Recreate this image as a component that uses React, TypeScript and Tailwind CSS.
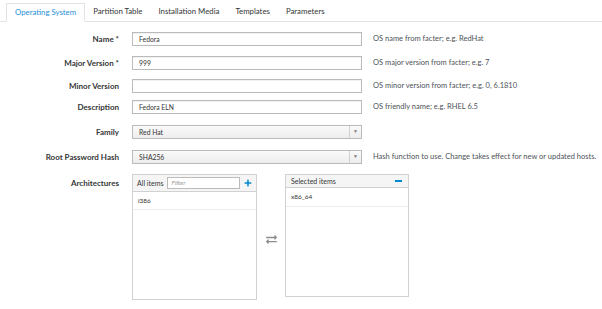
import { FaExchangeAlt, FaPlus } from "react-icons/fa";

const tabs = [
  "Operating System",
  "Partition Table",
  "Installation Media",
  "Templates",
  "Parameters",
];

function Row({
  label,
  help,
  className,
  children,
}: {
  label: string;
  help?: string;
  className?: string;
  children: React.ReactNode;
}) {
  return (
    <div className={`flex h-[14px] items-center ${className ?? ""}`}>
      <label className="w-[120px] shrink-0 pr-[1px] text-right text-[8px] font-bold text-[#363636]">
        {label}
      </label>
      <div className="ml-[12px] w-[230px] shrink-0">{children}</div>
      {help && (
        <span className="ml-[11px] whitespace-nowrap text-[7.5px] text-[#4d5258]">
          {help}
        </span>
      )}
    </div>
  );
}

function TextInput({ value }: { value: string }) {
  return (
    <div className="flex h-[14px] items-center border border-[#bbb] bg-white px-[6px] text-[6.8px] text-[#363636] shadow-[inset_0_1px_1px_rgba(0,0,0,0.06)]">
      {value}
    </div>
  );
}

function Select({ value }: { value: string }) {
  return (
    <div className="flex h-[14px] items-center border border-[#bbb] bg-gradient-to-b from-[#fafafa] to-[#ededed] text-[6.8px] text-[#363636]">
      <span className="flex-1 px-[6px]">{value}</span>
      <span className="flex h-full w-[12px] items-center justify-center border-l border-[#d1d1d1] text-[5px] text-[#777]">
        ▼
      </span>
    </div>
  );
}

export default function App() {
  return (
    <div className="h-[309px] w-[602px] overflow-hidden bg-white font-['Lato','Open_Sans',sans-serif]">
      <div className="flex h-[22px] items-end border-b border-[#e3e3e3] pl-[6px]">
        {tabs.map((t, i) => (
          <div
            key={t}
            className={
              i === 0
                ? "-mb-px flex h-[19px] items-center border border-b-white border-[#e3e3e3] bg-white px-[8px] text-[7.8px] text-[#1f8fd6]"
                : "flex h-[19px] items-center px-[8px] text-[7.8px] text-[#363636]"
            }
          >
            {t}
          </div>
        ))}
      </div>

      <div className="flex flex-col">
        <Row label="Name *" help="OS name from facter; e.g. RedHat" className="mt-[10px]">
          <TextInput value="Fedora" />
        </Row>
        <Row label="Major Version *" help="OS major version from facter; e.g. 7" className="mt-[10px]">
          <TextInput value="999" />
        </Row>
        <Row label="Minor Version" help="OS minor version from facter; e.g. 0, 6.1810" className="mt-[9px]">
          <TextInput value="" />
        </Row>
        <Row label="Description" help="OS friendly name; e.g. RHEL 6.5" className="mt-[7px]">
          <TextInput value="Fedora ELN" />
        </Row>
        <Row label="Family" className="mt-[11px]">
          <Select value="Red Hat" />
        </Row>
        <Row
          label="Root Password Hash"
          help="Hash function to use. Change takes effect for new or updated hosts."
          className="mt-[11px]"
        >
          <Select value="SHA256" />
        </Row>

        <div className="mt-[10px] flex">
          <label className="w-[120px] shrink-0 pr-[1px] pt-[3px] text-right text-[8px] font-bold text-[#363636]">
            Architectures
          </label>
          <div className="ml-[12px] flex">
            <div className="flex h-[126px] w-[125px] flex-col border border-[#d1d1d1]">
              <div className="flex h-[17px] items-center gap-[4px] border-b border-[#d1d1d1] bg-[#f5f5f5] pl-[4px] pr-[4px] text-[7px] text-[#363636]">
                <span className="whitespace-nowrap">All items</span>
                <div className="flex h-[12px] w-[73px] items-center border border-[#bbb] bg-white px-[3px] text-[6.5px] italic text-[#999]">
                  Filter
                </div>
                <FaPlus className="ml-auto h-[8px] w-[8px] text-[#0088ce]" />
              </div>
              <div className="flex h-[18px] items-center border-b border-[#ededed] px-[5px] text-[6.5px] text-[#363636]">
                i386
              </div>
            </div>

            <div className="flex w-[28px] items-center justify-center">
              <FaExchangeAlt className="mt-[4px] h-[11px] w-[11px] text-[#8b8d8f]" />
            </div>

            <div className="flex h-[123px] w-[124px] flex-col border border-[#d1d1d1]">
              <div className="flex h-[13px] items-center border-b border-[#d1d1d1] bg-[#f5f5f5] pl-[5px] pr-[6px] text-[7px] text-[#363636]">
                <span>Selected items</span>
                <span className="ml-auto h-[2px] w-[7px] bg-[#0088ce]" />
              </div>
              <div className="flex h-[19px] items-center border-b border-[#ededed] px-[5px] text-[6.5px] text-[#363636]">
                x86_64
              </div>
            </div>
          </div>
        </div>
      </div>
    </div>
  );
}
